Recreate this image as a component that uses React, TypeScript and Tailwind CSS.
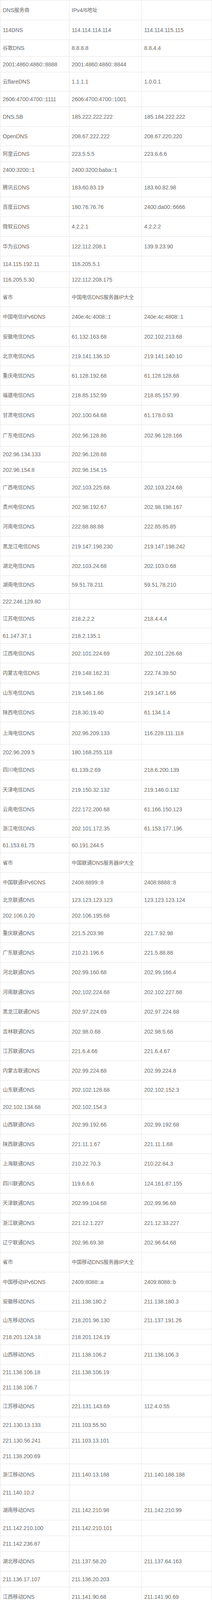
import React from "react";

type Row = [string, string, string, number];

const H: Record<number, string> = {
  30: "h-[30px]",
  36: "h-[36px]",
  37: "h-[37px]",
  39: "h-[39px]",
  40: "h-[40px]",
  41: "h-[41px]",
  43: "h-[43px]",
  44: "h-[44px]",
  46: "h-[46px]",
  47: "h-[47px]",
  48: "h-[48px]",
  49: "h-[49px]",
  50: "h-[50px]",
  51: "h-[51px]",
  54: "h-[54px]",
  55: "h-[55px]",
  56: "h-[56px]",
  57: "h-[57px]",
  62: "h-[62px]",
  68: "h-[68px]",
};

const rows: Row[] = [
  ["DNS服务商", "IPv4/6地址", "", 51],
  ["114DNS", "114.114.114.114", "114.114.115.115", 50],
  ["谷歌DNS", "8.8.8.8", "8.8.4.4", 43],
  ["2001:4860:4860::8888", "2001:4860:4860::8844", "", 40],
  ["云flareDNS", "1.1.1.1", "1.0.0.1", 49],
  ["2606:4700:4700::1111", "2606:4700:4700::1001", "", 40],
  ["DNS.SB", "185.222.222.222", "185.184.222.222", 50],
  ["OpenDNS", "208.67.222.222", "208.67.220.220", 50],
  ["阿里云DNS", "223.5.5.5", "223.6.6.6", 41],
  ["2400:3200::1", "2400:3200:baba::1", "", 40],
  ["腾讯云DNS", "183.60.83.19", "183.60.82.98", 50],
  ["百度云DNS", "180.76.76.76", "2400:da00::6666", 50],
  ["微软云DNS", "4.2.2.1", "4.2.2.2", 51],
  ["华为云DNS", "122.112.208.1", "139.9.23.90", 50],
  ["114.115.192.11", "116.205.5.1", "", 40],
  ["116.205.5.30", "122.112.208.175", "", 40],
  ["省市", "中国电信DNS服务器IP大全", "", 50],
  ["中国电信IPv6DNS", "240e:4c:4008::1", "240e:4c:4808::1", 51],
  ["安徽电信DNS", "61.132.163.68", "202.102.213.68", 50],
  ["北京电信DNS", "219.141.136.10", "219.141.140.10", 50],
  ["重庆电信DNS", "61.128.192.68", "61.128.128.68", 50],
  ["福建电信DNS", "218.85.152.99", "218.85.157.99", 51],
  ["甘肃电信DNS", "202.100.64.68", "61.178.0.93", 50],
  ["广东电信DNS", "202.96.128.86", "202.96.128.166", 55],
  ["202.96.134.133", "202.96.128.68", "", 40],
  ["202.96.154.8", "202.96.154.15", "", 40],
  ["广西电信DNS", "202.103.225.68", "202.103.224.68", 50],
  ["贵州电信DNS", "202.98.192.67", "202.98.198.167", 50],
  ["河南电信DNS", "222.88.88.88", "222.85.85.85", 51],
  ["黑龙江电信DNS", "219.147.198.230", "219.147.198.242", 50],
  ["湖北电信DNS", "202.103.24.68", "202.103.0.68", 50],
  ["湖南电信DNS", "59.51.78.211", "59.51.78.210", 46],
  ["222.246.129.80", "", "", 40],
  ["江苏电信DNS", "218.2.2.2", "218.4.4.4", 48],
  ["61.147.37.1", "218.2.135.1", "", 40],
  ["江西电信DNS", "202.101.224.69", "202.101.226.68", 50],
  ["内蒙古电信DNS", "219.148.162.31", "222.74.39.50", 51],
  ["山东电信DNS", "219.146.1.66", "219.147.1.66", 50],
  ["陕西电信DNS", "218.30.19.40", "61.134.1.4", 50],
  ["上海电信DNS", "202.96.209.133", "116.228.111.118", 57],
  ["202.96.209.5", "180.168.255.118", "", 40],
  ["四川电信DNS", "61.139.2.69", "218.6.200.139", 51],
  ["天津电信DNS", "219.150.32.132", "219.146.0.132", 50],
  ["云南电信DNS", "222.172.200.68", "61.166.150.123", 51],
  ["浙江电信DNS", "202.101.172.35", "61.153.177.196", 46],
  ["61.153.81.75", "60.191.244.5", "", 40],
  ["省市", "中国联通DNS服务器IP大全", "", 50],
  ["中国联通IPv6DNS", "2408:8899::8", "2408:8888::8", 50],
  ["北京联通DNS", "123.123.123.123", "123.123.123.124", 40],
  ["202.106.0.20", "202.106.195.68", "", 40],
  ["重庆联通DNS", "221.5.203.98", "221.7.92.98", 50],
  ["广东联通DNS", "210.21.196.6", "221.5.88.88", 50],
  ["河北联通DNS", "202.99.160.68", "202.99.166.4", 51],
  ["河南联通DNS", "202.102.224.68", "202.102.227.68", 50],
  ["黑龙江联通DNS", "202.97.224.69", "202.97.224.68", 51],
  ["吉林联通DNS", "202.98.0.68", "202.98.5.68", 50],
  ["江苏联通DNS", "221.6.4.66", "221.6.4.67", 50],
  ["内蒙古联通DNS", "202.99.224.68", "202.99.224.8", 50],
  ["山东联通DNS", "202.102.128.68", "202.102.152.3", 48],
  ["202.102.134.68", "202.102.154.3", "", 40],
  ["山西联通DNS", "202.99.192.66", "202.99.192.68", 50],
  ["陕西联通DNS", "221.11.1.67", "221.11.1.68", 50],
  ["上海联通DNS", "210.22.70.3", "210.22.84.3", 51],
  ["四川联通DNS", "119.6.6.6", "124.161.87.155", 50],
  ["天津联通DNS", "202.99.104.68", "202.99.96.68", 51],
  ["浙江联通DNS", "221.12.1.227", "221.12.33.227", 50],
  ["辽宁联通DNS", "202.96.69.38", "202.96.64.68", 50],
  ["省市", "中国移动DNS服务器IP大全", "", 51],
  ["中国移动IPv6DNS", "2409:8088::a", "2409:8088::b", 50],
  ["安徽移动DNS", "211.138.180.2", "211.138.180.3", 50],
  ["山东移动DNS", "218.201.96.130", "211.137.191.26", 46],
  ["218.201.124.18", "218.201.124.19", "", 40],
  ["山西移动DNS", "211.138.106.2", "211.138.106.3", 50],
  ["211.138.106.18", "211.138.106.19", "", 40],
  ["211.138.106.7", "", "", 39],
  ["江苏移动DNS", "221.131.143.69", "112.4.0.55", 56],
  ["221.130.13.133", "211.103.55.50", "", 40],
  ["221.130.56.241", "211.103.13.101", "", 40],
  ["211.138.200.69", "", "", 40],
  ["浙江移动DNS", "211.140.13.188", "211.140.188.188", 54],
  ["211.140.10.2", "", "", 39],
  ["湖南移动DNS", "211.142.210.98", "211.142.210.99", 51],
  ["211.142.210.100", "211.142.210.101", "", 40],
  ["211.142.236.87", "", "", 40],
  ["湖北移动DNS", "211.137.58.20", "211.137.64.163", 51],
  ["211.136.17.107", "211.136.20.203", "", 40],
  ["江西移动DNS", "211.141.90.68", "211.141.90.69", 51],
  ["211.141.85.68", "", "", 40],
  ["陕西移动DNS", "211.137.130.3", "211.137.130.19", 49],
  ["218.200.6.139", "", "", 40],
  ["四川移动DNS", "211.137.82.4", "", 51],
  ["重庆移动DNS", "218.201.4.3", "218.201.21.132", 68],
  ["北京移动DNS", "221.130.33.52", "221.130.33.60", 50],
  ["211.136.28.231", "211.136.28.234", "", 40],
  ["211.136.28.237", "211.136.28.228", "", 40],
  ["221.130.32.103", "221.130.32.100", "", 39],
  ["221.130.32.106", "221.130.32.109", "", 40],
  ["221.176.3.70", "221.176.3.73", "", 40],
  ["221.176.3.76", "221.176.3.79", "", 40],
  ["221.176.3.83", "221.176.3.85", "", 40],
  ["221.176.4.6", "221.176.4.9", "", 40],
  ["221.176.4.12", "221.176.4.15", "", 39],
  ["221.176.4.18", "221.176.4.21", "", 41],
  ["天津移动DNS", "211.137.160.50", "211.137.160.185", 50],
  ["上海移动DNS", "211.136.112.50", "211.136.150.66", 50],
  ["广东移动DNS", "211.136.192.6", "211.136.20.204", 46],
  ["211.139.163.6", "211.139.136.68", "", 40],
  ["211.136.18.171", "", "", 39],
  ["广西移动DNS", "211.138.245.180", "211.136.17.108", 44],
  ["211.139.5.30", "", "", 40],
  ["贵州移动DNS", "211.139.5.29", "211.139.5.30", 50],
  ["福建移动DNS", "211.138.151.161", "211.138.156.66", 54],
  ["218.207.217.241", "218.207.217.242", "", 40],
  ["211.143.181.178", "211.143.181.179", "", 40],
  ["218.207.128.4", "218.207.130.118", "", 40],
  ["211.138.145.194", "", "", 40],
  ["河北移动DNS", "211.143.60.56", "211.138.13.66", 50],
  ["甘肃移动DNS", "218.203.160.194", "218.203.160.195", 50],
  ["黑龙江移动DNS", "211.137.241.34", "211.137.241.35", 48],
  ["吉林移动DNS", "211.141.16.99", "211.141.0.99", 46],
  ["辽宁移动DNS", "211.137.32.178", "211.140.197.58", 46],
  ["云南移动DNS", "211.139.29.68", "211.139.29.69", 62],
  ["211.139.29.150", "211.139.29.170", "", 37],
  ["218.202.1.166", "", "", 36],
  ["海南移动DNS", "221.176.88.95", "211.138.164.6", 47],
  ["内蒙古移动DNS", "211.138.91.1", "211.138.91.2", 46],
  ["新疆移动DNS", "218.202.152.130", "218.202.152.131", 46],
  ["西藏移动DNS", "211.139.73.34", "211.139.73.35", 47],
  ["青海移动DNS", "211.138.75.123", "", 46],
];

// Render CJK runs a touch smaller, as the reference's CJK glyphs are ~13px wide
function Txt({ s }: { s: string }) {
  const parts = s.match(/[\u3000-\u9fff\uff00-\uffef]+|[^\u3000-\u9fff\uff00-\uffef]+/g) || [];
  return (
    <>
      {parts.map((p, i) =>
        /[\u3000-\u9fff\uff00-\uffef]/.test(p) ? (
          <span key={i} className="text-[13px]">
            {p}
          </span>
        ) : (
          <span key={i}>{p}</span>
        )
      )}
    </>
  );
}

export default function App() {
  return (
    <div className="w-[544px] bg-white font-['Liberation_Sans','Noto_Sans_CJK_SC',sans-serif] text-[14px] leading-[20px] text-[#6b6b6b]">
      <div className="flex flex-col border-t border-l border-r border-[#e4e4e4]">
        {rows.map((r, i) => (
          <div
            key={i}
            className={`flex shrink-0 overflow-hidden border-b border-[#e4e4e4] ${H[r[3]]}`}
          >
            <div className="flex w-[177px] shrink-0 items-center whitespace-nowrap border-r border-[#e4e4e4] pl-[6px]">
              <Txt s={r[0]} />
            </div>
            <div className="flex w-[186px] shrink-0 items-center whitespace-nowrap border-r border-[#e4e4e4] pl-[6px]">
              <Txt s={r[1]} />
            </div>
            <div className="flex min-w-0 flex-1 items-center whitespace-nowrap pl-[6px]">
              <Txt s={r[2]} />
            </div>
          </div>
        ))}
        <div className="flex h-[30px] shrink-0 items-center border-b border-[#e4e4e4] pl-[6px] text-[13px] font-bold text-[#e5403c]">
          以上信息仅供参考！一切以官方发布为准！
        </div>
      </div>
    </div>
  );
}
